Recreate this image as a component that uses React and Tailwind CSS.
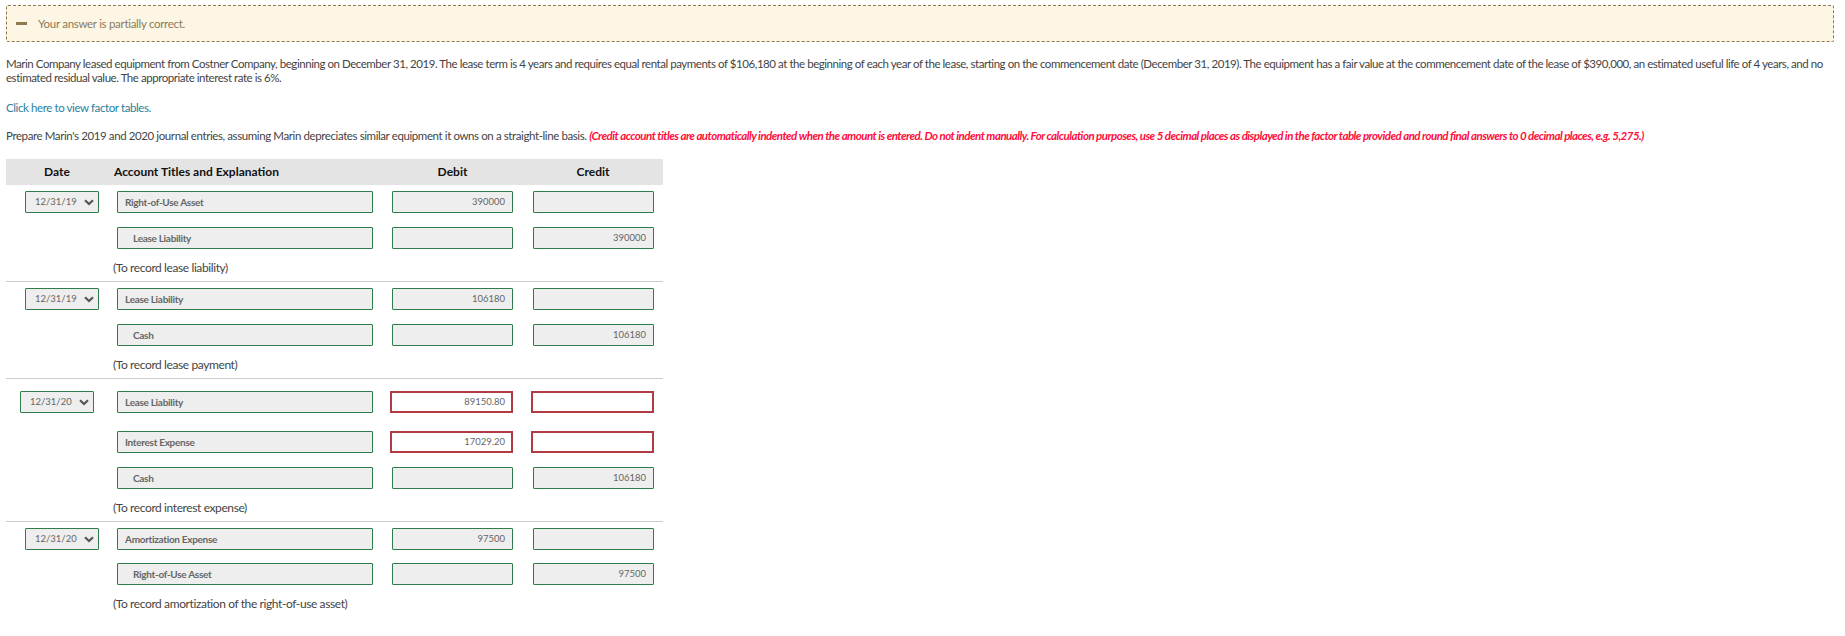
const Chevron = () => (
  <svg width="10" height="7" viewBox="0 0 10 7" className="shrink-0">
    <path d="M1 1.2 L5 5 L9 1.2" fill="none" stroke="#555" strokeWidth="2.2" />
  </svg>
);

const Select = ({ value, narrow }) => (
  <div className={`h-[22px] w-[74px] flex items-center justify-between pl-[9px] pr-[4px] border border-[#2f7d4a] rounded-[1px] bg-[#eeeeee] text-[9.5px] text-[#666] ${narrow ? "ml-[14px]" : "ml-[19px]"}`}>
    <span>{value}</span>
    <Chevron />
  </div>
);

const Account = ({ text, indent }) => (
  <div className={`h-[22px] w-[256px] flex items-center border border-[#2f7d4a] rounded-[1px] bg-[#eeeeee] text-[10px] tracking-[-0.3px] font-bold text-[#666] ${indent ? "pl-[15px]" : "pl-[7px]"}`}>
    {text}
  </div>
);

const Amount = ({ value }) => (
  <div className="h-[22px] w-[121px] flex items-center justify-end pr-[7px] border border-[#2f7d4a] rounded-[1px] bg-[#eeeeee] text-[9.5px] text-[#666]">
    {value}
  </div>
);

const Wrong = ({ value }) => (
  <div className="h-[22px] w-[123px] flex items-center justify-end pr-[6px] border-2 border-[#b23a42] bg-white text-[9.5px] text-[#666]">
    {value}
  </div>
);

const Row = ({ date, narrow, text, indent, debit, credit, wrong, className }) => (
  <div className={`flex ${className}`}>
    <div className="w-[111px]">{date && <Select value={date} narrow={narrow} />}</div>
    <Account text={text} indent={indent} />
    {wrong ? (
      <>
        <div className="ml-[17px]"><Wrong value={debit} /></div>
        <div className="ml-[18px]"><Wrong value={credit} /></div>
      </>
    ) : (
      <>
        <div className="ml-[19px]"><Amount value={debit} /></div>
        <div className="ml-[20px]"><Amount value={credit} /></div>
      </>
    )}
  </div>
);

const Note = ({ children, className }) => (
  <div className={`pl-[107px] text-[12px] leading-[16px] tracking-[-0.4px] text-[#444] ${className}`}>{children}</div>
);

export default function App() {
  return (
    <div className="w-[1845px] h-[636px] overflow-hidden bg-white text-[#444] font-['Lato','Noto_Sans',sans-serif]">
      <div className="mx-[6px] mt-[5px] w-[1828px] h-[37px] flex items-center pl-[9px] border border-dashed border-[#8f7a4e] rounded-[2px] bg-[#fef6e4]">
        <div className="w-[11px] h-[3px] bg-[#8f7a4e]" />
        <span className="ml-[11px] text-[11.5px] tracking-[-0.3px] text-[#8a7a5c]">Your answer is partially correct.</span>
      </div>

      <p className="mx-[6px] mt-[15px] text-[11.5px] leading-[14px] tracking-[-0.45px] text-[#444]">
        Marin Company leased equipment from Costner Company, beginning on December 31, 2019. The lease term is 4 years and requires equal rental payments of $106,180 at the beginning of each year of the lease, starting on the commencement date (December 31, 2019). The equipment has a fair value at the commencement date of the lease of $390,000, an estimated useful life of 4 years, and no estimated residual value. The appropriate interest rate is 6%.
      </p>

      <p className="mx-[6px] mt-[16px] text-[11.5px] leading-[14px] tracking-[-0.4px] text-[#2a7f9e]">Click here to view factor tables.</p>

      <p className="mx-[6px] mt-[14px] text-[11.5px] leading-[14px] tracking-[-0.4px] whitespace-nowrap text-[#444]">
        Prepare Marin's 2019 and 2020 journal entries, assuming Marin depreciates similar equipment it owns on a straight-line basis.{" "}
        <span className="font-bold italic tracking-[-0.52px] text-[#ff0d3c]">
          (Credit account titles are automatically indented when the amount is entered. Do not indent manually. For calculation purposes, use 5 decimal places as displayed in the factor table provided and round final answers to 0 decimal places, e.g. 5,275.)
        </span>
      </p>

      <div className="ml-[6px] mt-[16px] w-[657px]">
        <div className="h-[26px] flex items-center bg-[#e4e4e4] text-[12px] font-bold text-[#111]">
          <div className="w-[108px] pl-[38px]">Date</div>
          <div className="w-[259px]">Account Titles and Explanation</div>
          <div className="w-[140px] pl-[19px] text-center">Debit</div>
          <div className="w-[140px] pl-[20px] text-center">Credit</div>
        </div>

        <Row className="mt-[6px]" date="12/31/19" text="Right-of-Use Asset" debit="390000" />
        <Row className="mt-[14px]" text="Lease Liability" indent credit="390000" />
        <Note className="mt-[11px]">(To record lease liability)</Note>
        <div className="mt-[5px] h-px bg-[#ccc]" />

        <Row className="mt-[6px]" date="12/31/19" text="Lease Liability" debit="106180" />
        <Row className="mt-[14px]" text="Cash" indent credit="106180" />
        <Note className="mt-[11px]">(To record lease payment)</Note>
        <div className="mt-[5px] h-px bg-[#ccc]" />

        <Row className="mt-[12px]" date="12/31/20" narrow text="Lease Liability" debit="89150.80" wrong />
        <Row className="mt-[18px]" text="Interest Expense" debit="17029.20" wrong />
        <Row className="mt-[14px]" text="Cash" indent credit="106180" />
        <Note className="mt-[11px]">(To record interest expense)</Note>
        <div className="mt-[5px] h-px bg-[#ccc]" />

        <Row className="mt-[6px]" date="12/31/20" text="Amortization Expense" debit="97500" />
        <Row className="mt-[13px]" text="Right-of-Use Asset" indent credit="97500" />
        <Note className="mt-[11px]">(To record amortization of the right-of-use asset)</Note>
      </div>
    </div>
  );
}
